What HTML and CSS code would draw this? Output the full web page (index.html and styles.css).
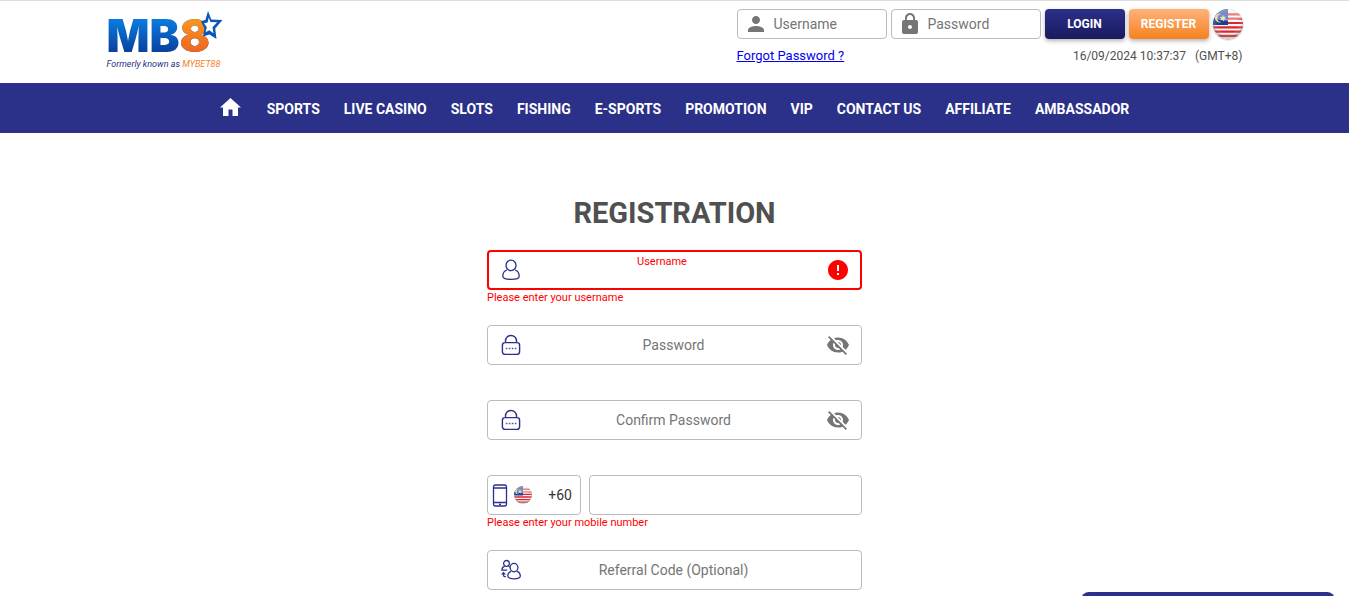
FILE: index.html
```html
<!DOCTYPE html>
<html lang="en">
<head>
	<meta charset="UTF-8">
	<meta name="viewport" content="width=device-width, initial-scale=1">
	<title>Registration</title>
	<link rel="stylesheet" href="styles.css">
</head>
<body>
	<!-- shared icons -->
	<svg class="sprite" aria-hidden="true">
		<defs>
			<clipPath id="round"><circle cx="15" cy="15" r="15"/></clipPath>
			<radialGradient id="gloss" cx="50%" cy="45%" r="55%">
				<stop offset="65%" stop-color="#fff" stop-opacity="0"/>
				<stop offset="100%" stop-color="#555" stop-opacity=".45"/>
			</radialGradient>
		</defs>
		<symbol id="flag" viewBox="0 0 30 30">
			<g clip-path="url(#round)">
				<path fill="#f4f4f6" d="M0 0h30v30H0z"/>
				<path stroke="#d9262b" stroke-width="2.2" d="M0 5.400h30M0 9.700h30M0 14h30M0 18.300h30M0 22.600h30M0 26.900h30"/>
				<path fill="#1c3f94" d="M0 0h15v16H0z"/>
				<path fill="#e8d48a" d="M8.300 5.200a4.400 4.400 0 1 0 0 7.800 3.600 3.600 0 1 1 0-7.800z"/>
				<path fill="#e8d48a" d="M10 5.800l.8 2.100 2.200-.7-1.300 1.900 1.600 1.600-2.300-.1-.6 2.200-1-2.100-2 .8 1-2-1.600-1.500 2.200.1z"/>
				<path fill="#fff" fill-opacity=".4" d="M0 0h30v9Q15 15 0 9z"/>
				<circle cx="15" cy="15" r="15" fill="url(#gloss)"/>
			</g>
		</symbol>
		<symbol id="lock" viewBox="0 0 20 22">
			<path fill="none" stroke="#2b3089" stroke-width="1.400" d="M4.500 8.600V7a5.500 5.500 0 0 1 11 0v1.600M4 8.600h12c1.800 0 2.600 1 2.600 2.600v6.200c0 2-1 3-2.800 3H4.200c-1.800 0-2.800-1-2.800-3v-6.200C1.400 9.600 2.200 8.600 4 8.600z"/>
			<path stroke="#2b3089" stroke-width="1.600" stroke-opacity=".8" d="M4.800 14.500h1.600M7.800 14.500h1.600M10.800 14.500h1.600M13.800 14.500h1.600"/>
		</symbol>
		<symbol id="eye-off" viewBox="0 0 24 24">
			<path fill="#757575" d="M12 7c2.760 0 5 2.240 5 5 0 .65-.13 1.260-.36 1.830l2.920 2.920c1.510-1.260 2.700-2.890 3.430-4.750-1.730-4.390-6-7.500-11-7.500-1.400 0-2.740.25-3.980.7l2.160 2.160C10.740 7.130 11.350 7 12 7zM2 4.270l2.280 2.280.46.46C3.080 8.300 1.780 10.020 1 12c1.730 4.390 6 7.500 11 7.500 1.550 0 3.030-.3 4.380-.84l.42.42L19.730 22 21 20.730 3.270 3 2 4.270zM7.530 9.800l1.550 1.550c-.05.21-.08.43-.08.65 0 1.660 1.340 3 3 3 .22 0 .44-.03.65-.08l1.550 1.550c-.67.33-1.410.53-2.200.53-2.760 0-5-2.240-5-5 0-.79.2-1.530.53-2.200zm4.310-.78l3.150 3.150.02-.16c0-1.660-1.340-3-3-3l-.17.01z"/>
		</symbol>
	</svg>

	<header class="header">
		<div class="header-inner">
			<a class="logo" href="#">
				<span class="logo-name">MB<span class="logo-eight">8</span></span>
				<svg class="logo-star" viewBox="0 0 22 29" aria-hidden="true">
					<path fill="#0a56b8" d="M7 0l3.300 8.500L21.500 9l-7.300 8.500L15.500 28 8.500 23.500 2 25.500l1.500-8L0 10.500l4.500-1.800z"/>
					<path fill="#fff" d="M7.800 6.500l1.600 4.600 6.800.2-4.700 5 1 6-4.300-3-3.600 2 1.200-5-2.800-4 3.600-.8z"/>
				</svg>
				<span class="logo-note">Formerly known as <em>MYBET88</em></span>
			</a>

			<form class="login">
				<div class="login-row">
					<label class="login-box">
						<svg width="24" height="24" viewBox="0 0 24 24" aria-hidden="true"><path fill="#757575" d="M12 12c2.210 0 4-1.790 4-4s-1.790-4-4-4-4 1.790-4 4 1.790 4 4 4zm0 2c-2.670 0-8 1.340-8 4v2h16v-2c0-2.660-5.330-4-8-4z"/></svg>
						<input type="text" placeholder="Username" aria-label="Username">
					</label>
					<label class="login-box">
						<svg width="24" height="24" viewBox="0 0 24 24" aria-hidden="true"><path fill="#757575" d="M18 8h-1V6c0-2.760-2.240-5-5-5S7 3.240 7 6v2H6c-1.100 0-2 .9-2 2v10c0 1.100.9 2 2 2h12c1.100 0 2-.9 2-2V10c0-1.100-.9-2-2-2zm-6 9c-1.100 0-2-.9-2-2s.9-2 2-2 2 .9 2 2-.9 2-2 2zm3.100-9H8.900V6c0-1.710 1.390-3.100 3.100-3.100s3.100 1.390 3.100 3.100v2z"/></svg>
						<input type="password" placeholder="Password" aria-label="Password">
					</label>
					<button class="btn btn-login" type="submit">LOGIN</button>
					<button class="btn btn-register" type="button">REGISTER</button>
					<button class="lang" type="button" aria-label="Language"><svg width="30" height="30" aria-hidden="true"><use href="#flag"/></svg></button>
				</div>
				<div class="login-info">
					<a href="#">Forgot Password ?</a>
					<div class="clock"><span>16/09/2024 10:37:37</span><span>(GMT+8)</span></div>
				</div>
			</form>
		</div>
	</header>

	<nav class="nav">
		<a class="home" href="#" aria-label="Home"><svg width="21" height="18" viewBox="0 0 21 18" aria-hidden="true"><path fill="#fff" d="M10.500 0L0 9.500h3V18h5.500v-6.500h4V18H18V9.500h3z"/></svg></a>
		<a href="#">SPORTS</a>
		<a href="#">LIVE CASINO</a>
		<a href="#">SLOTS</a>
		<a href="#">FISHING</a>
		<a href="#">E-SPORTS</a>
		<a href="#">PROMOTION</a>
		<a href="#">VIP</a>
		<a href="#">CONTACT US</a>
		<a href="#">AFFILIATE</a>
		<a href="#">AMBASSADOR</a>
	</nav>

	<main class="main">
		<h1>REGISTRATION</h1>
		<form class="register">
			<div class="field">
				<div class="box box-error">
					<svg width="20" height="22" viewBox="0 0 20 22" aria-hidden="true"><path fill="none" stroke="#2b3089" stroke-width="1.300" d="M10 1.200c2.900 0 5 2.400 5 5.200s-2.100 5.200-5 5.200-5-2.400-5-5.200 2.100-5.200 5-5.200zM5.800 11c-2.500 1-4 3.200-4 6.200 0 2.300 2.400 3.200 8.200 3.200s8.200-.9 8.200-3.200c0-3-1.500-5.200-4-6.200"/></svg>
					<label class="float-label" for="username">Username</label>
					<input id="username" type="text">
					<svg width="24" height="24" viewBox="0 0 24 24" aria-hidden="true"><path fill="#f00" d="M12 2C6.480 2 2 6.480 2 12s4.480 10 10 10 10-4.480 10-10S17.520 2 12 2zm1 15h-2v-2h2v2zm0-4h-2V7h2v6z"/></svg>
				</div>
				<p class="error">Please enter your username</p>
			</div>
			<div class="field">
				<div class="box">
					<svg width="20" height="22" aria-hidden="true"><use href="#lock"/></svg>
					<input type="password" placeholder="Password" aria-label="Password">
					<button class="eye" type="button" aria-label="Show password"><svg width="24" height="24" aria-hidden="true"><use href="#eye-off"/></svg></button>
				</div>
			</div>
			<div class="field">
				<div class="box">
					<svg width="20" height="22" aria-hidden="true"><use href="#lock"/></svg>
					<input type="password" placeholder="Confirm Password" aria-label="Confirm Password">
					<button class="eye" type="button" aria-label="Show password"><svg width="24" height="24" aria-hidden="true"><use href="#eye-off"/></svg></button>
				</div>
			</div>
			<div class="field">
				<div class="phone">
					<div class="box box-code">
						<svg width="16" height="23" viewBox="0 0 16 23" aria-hidden="true"><path fill="none" stroke="#2b3089" stroke-width="1.300" d="M3.500 1h9c1.300 0 2 .7 2 2v17c0 1.300-.7 2-2 2h-9c-1.300 0-2-.7-2-2V3c0-1.300.7-2 2-2zM1.500 4h13M1.500 18.500h13M7 20.300h2"/></svg>
						<svg width="18" height="18" aria-hidden="true"><use href="#flag"/></svg>
						<select aria-label="Country code"><option>+60</option></select>
					</div>
					<div class="box">
						<input type="tel" aria-label="Mobile number">
					</div>
				</div>
				<p class="error">Please enter your mobile number</p>
			</div>
			<div class="field">
				<div class="box">
					<svg width="20" height="22" viewBox="0 0 20 22" aria-hidden="true">
						<g fill="none" stroke="#2b3089" stroke-width="1.300">
							<circle cx="5.500" cy="4.400" r="2.900"/>
							<path d="M3.700 7.200C1.800 7.800.9 9.200.9 11.200h5.300M7.500 7.200l1.400.8"/>
							<ellipse cx="13" cy="8.600" rx="3.900" ry="4.200"/>
							<path d="M10 12.300c-2 .8-3.200 2.400-3.200 4.800 0 2 2 2.800 6.200 2.800s6.300-.8 6.300-2.800c0-2.400-1.200-4-3.300-4.800"/>
							<path d="M2.500 14.500v1.700c0 1 .6 1.500 2.300 1.500"/>
						</g>
						<path fill="#2b3089" d="M0 15.500l2.500-2.700L5 15.500z"/>
					</svg>
					<input type="text" placeholder="Referral Code (Optional)" aria-label="Referral Code (Optional)">
					<span class="spacer"></span>
				</div>
			</div>
		</form>
	</main>

	<button class="chat" type="button" aria-label="Live chat"></button>
</body>
</html>
```
FILE: styles.css
```css
*{
	box-sizing: border-box;
}
body,p,h1{
	margin: 0;
}
body{
	font-family: Roboto, "Liberation Sans", sans-serif;
	font-size: 14px;
	color: #505050;
	background: #fff;
}
input,select,button{
	font: inherit;
	color: inherit;
	background: none;
	border: 0;
	padding: 0;
	margin: 0;
}
input{
	min-width: 0;
	flex: 1;
	height: 100%;
	outline: none;
}
input::placeholder{
	color: #757575;
	opacity: 1;
}
button{
	cursor: pointer;
}
svg{
	display: block;
	flex: none;
}
.sprite{
	position: absolute;
	width: 0;
	height: 0;
}

/* header */
.header{
	border-top: 1px solid #ddd;
}
.header-inner{
	display: flex;
	justify-content: space-between;
	max-width: 1136px;
	height: 82px;
	margin: 0 auto;
	padding-top: 8px;
}
.logo{
	position: relative;
	display: flex;
	flex-direction: column;
	text-decoration: none;
}
.logo-name{
	font-family: Inter, Roboto, sans-serif;
	font-weight: 900;
	font-size: 45px;
	line-height: 54px;
	height: 49px;
	color: transparent;
	background: linear-gradient(#0a78dc 25%, #0a3f9c 90%);
	-webkit-background-clip: text;
	background-clip: text;
}
.logo-eight{
	background: linear-gradient(#f7941d 25%, #f15a22 90%);
	-webkit-background-clip: text;
	background-clip: text;
}
.logo-star{
	position: absolute;
	top: 2px;
	left: 94px;
	width: 22px;
	height: 29px;
}
.logo-note{
	font-size: 9px;
	line-height: 12px;
	font-style: italic;
	color: #2b3089;
}
.logo-note em{
	color: #f5821f;
}
.login-row{
	display: flex;
	gap: 4px;
}
.login-box{
	display: flex;
	align-items: center;
	gap: 6px;
	width: 150px;
	height: 30px;
	padding: 0 6px;
	border: 1px solid #bbb;
	border-radius: 4px;
}
.btn{
	width: 80px;
	height: 30px;
	border-radius: 4px;
	font-size: 12px;
	font-weight: bold;
	color: #fff;
	box-shadow: 0 2px 4px rgba(0,0,0,.3);
}
.btn-login{
	background: linear-gradient(#2b3089, #1a1a5e);
}
.btn-register{
	background: linear-gradient(#ffb27a, #f5821f);
}
.lang{
	width: 30px;
	height: 30px;
	border-radius: 50%;
	box-shadow: 0 1px 2px rgba(0,0,0,.3);
}
.login-info{
	display: flex;
	justify-content: space-between;
	margin-top: 9px;
	font-size: 12px;
	line-height: 16px;
}
.login-info a{
	font-size: 13px;
	color: #00e;
}
.clock{
	display: flex;
	gap: 9px;
}

/* menu */
.nav{
	display: flex;
	justify-content: center;
	align-items: center;
	gap: 24px;
	height: 50px;
	padding-top: 2px;
	background: #2b3089;
}
.nav a{
	color: #fff;
	font-weight: bold;
	text-decoration: none;
	white-space: nowrap;
}
.nav .home{
	padding: 0 2px 4px 0;
}

/* registration */
.main{
	padding: 60px 16px 0;
}
h1{
	font-size: 29px;
	line-height: 40px;
	text-align: center;
}
.register{
	display: grid;
	grid-auto-rows: 75px;
	max-width: 375px;
	height: 358px;
	margin: 17px auto 0;
}
.box{
	position: relative;
	display: flex;
	align-items: center;
	flex: 1;
	height: 40px;
	padding: 0 11px 0 13px;
	border: 1px solid #bbb;
	border-radius: 4px;
}
.box input{
	text-align: center;
}
.box-error{
	padding: 0 10px 0 12px;
	border: 2px solid #f00;
}
.float-label{
	position: absolute;
	top: 3px;
	left: 0;
	right: 25px;
	font-size: 11px;
	line-height: 14px;
	text-align: center;
	color: #f00;
	pointer-events: none;
}
.error{
	font-size: 11px;
	line-height: 16px;
	color: #f00;
}
.eye,.spacer{
	width: 24px;
}
.phone{
	display: flex;
	gap: 8px;
}
.box-code{
	flex: none;
	width: 94px;
	gap: 6px;
	padding: 0 8px 0 4px;
}
.box-code select{
	flex: 1;
	appearance: none;
	text-align: right;
	text-align-last: right;
	color: #333;
	outline: none;
}

/* chat tab, mostly below the window edge */
.chat{
	position: fixed;
	right: 14px;
	bottom: -36px;
	width: 254px;
	height: 40px;
	border-radius: 8px 8px 0 0;
	background: #2b3089;
}
```
